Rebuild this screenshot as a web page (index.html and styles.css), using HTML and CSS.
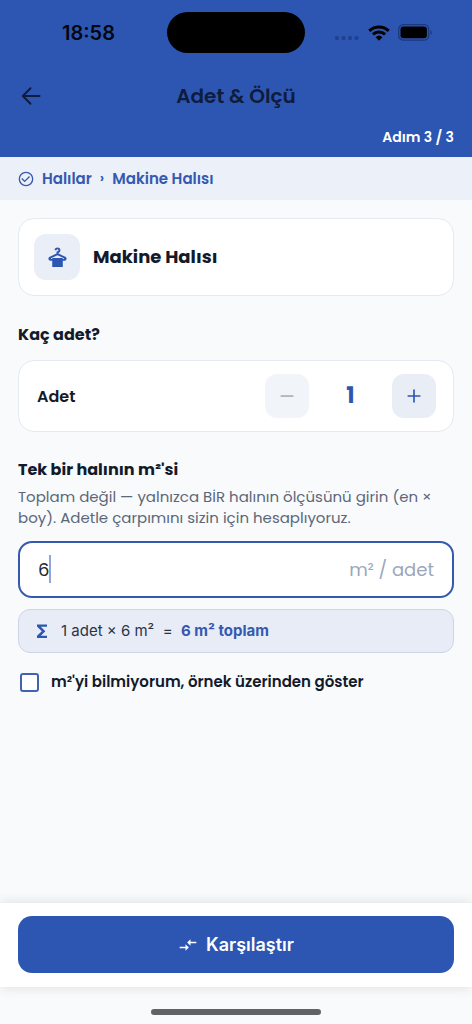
FILE: index.html
```html
<!DOCTYPE html>
<html lang="tr">
<head>
<meta charset="utf-8">
<meta name="viewport" content="width=device-width, initial-scale=1">
<title>Adet &amp; Ölçü</title>
<link rel="stylesheet" href="styles.css">
</head>
<body>
<div class="screen">
  <header class="header">
    <div class="status">
      <div class="status-side start"><span class="time">18:58</span></div>
      <div class="island"></div>
      <div class="status-side end">
        <svg width="26" height="18" viewBox="0 0 26 18" aria-hidden="true"><g fill="#1f4190"><rect x="1" y="12" width="4" height="4" rx="1.500"/><rect x="7.500" y="12" width="4" height="4" rx="1.500"/><rect x="14" y="12" width="4" height="4" rx="1.500"/><rect x="20.500" y="12" width="4" height="4" rx="1.500"/></g></svg>
        <svg width="22" height="16" viewBox="0 0 22 16" aria-hidden="true"><g fill="none" stroke="#000" stroke-width="3"><path d="M1.300 5.800a14 14 0 0 1 19.400 0"/><path d="M4.900 9.400a8.800 8.800 0 0 1 12.200 0"/></g><path d="M7.600 12.200a5 5 0 0 1 6.800 0L11 15.700z"/></svg>
        <svg width="35" height="17" viewBox="0 0 35 17" aria-hidden="true"><rect x=".7" y=".7" width="30" height="15.400" rx="4.600" fill="none" stroke="#1b397d" stroke-width="1.300"/><rect x="2.500" y="2.500" width="26.400" height="11.800" rx="3"/><path d="M32.500 6c1.700.8 1.700 4.200 0 5z" fill="#1b397d"/></svg>
      </div>
    </div>
    <div class="appbar">
      <button class="back" type="button" aria-label="Geri"><svg width="20" height="20" viewBox="0 0 20 20" fill="none" stroke="#0f1c3d" stroke-width="2" stroke-linecap="round" stroke-linejoin="round"><path d="M18.500 10H2M9.500 2.200 1.800 10l7.700 7.800"/></svg></button>
      <h1 class="title">Adet &amp; Ölçü</h1>
    </div>
    <p class="step">Adım 3 / 3</p>
  </header>
  <nav class="crumbs" aria-label="Kategori">
    <svg width="16" height="16" viewBox="0 0 24 24" fill="#3559b0" aria-hidden="true"><path d="M16.590 7.580 10 14.170l-3.590-3.580L5 12l5 5 8-8zM12 1a11 11 0 1 0 0 22 11 11 0 0 0 0-22zm0 20a9 9 0 1 1 0-18 9 9 0 0 1 0 18z"/></svg>
    <span>Halılar</span><span class="sep">›</span><span>Makine Halısı</span>
  </nav>
  <main class="content">
    <section class="card product">
      <span class="product-icon"><svg width="23" height="23" viewBox="0 0 24 24" fill="#2d56b2" aria-hidden="true"><path fill-rule="evenodd" d="M19.560 10.860 13 7.940V7.330c1.160-.410 2-1.520 2-2.830a3 3 0 0 0-6 0h2a1 1 0 1 1 1 1c-.550 0-1 .450-1 1v1.440l-6.560 2.920A2.400 2.400 0 0 0 2.500 13.060C2.500 14.400 3.580 15.500 5.420 15.500H6.500v6.500h11v-6.500h1.080C20.420 15.500 21.500 14.400 21.500 13.060c0-.950-1-1.810-1.940-2.200zM18.580 13.500H17.500v-1h-11v1H5.420c-.460 0-.580-.650-.170-.810L12 9.690l6.750 3c.420.190.280.810-.170.810z"/></svg></span>
      <h2 class="product-name">Makine Halısı</h2>
    </section>
    <section class="group quantity">
      <h2 class="label">Kaç adet?</h2>
      <div class="card counter">
        <span class="counter-label">Adet</span>
        <div class="stepper">
          <button class="step-btn off" type="button" aria-label="Azalt" disabled><svg width="22" height="22" viewBox="0 0 24 24" fill="currentColor"><path d="M5 11.200h14v1.700H5z"/></svg></button>
          <output class="count">1</output>
          <button class="step-btn" type="button" aria-label="Artır"><svg width="22" height="22" viewBox="0 0 24 24" fill="currentColor"><path d="M19 12.900h-6.100V19h-1.800v-6.100H5v-1.800h6.100V5h1.800v6.100H19z"/></svg></button>
        </div>
      </div>
    </section>
    <section class="group area">
      <label class="label" for="area">Tek bir halının m²'si</label>
      <p class="help">Toplam değil — yalnızca BİR halının ölçüsünü girin (en × boy). Adetle çarpımını sizin için hesaplıyoruz.</p>
      <div class="field">
        <input class="field-input" id="area" type="text" inputmode="decimal" value="6">
        <span class="caret"></span>
        <span class="unit">m² / adet</span>
      </div>
      <div class="total">
        <svg width="18" height="18" viewBox="0 0 18 18" fill="#2d56b2" aria-hidden="true"><path d="M14 2.500H4v2L8.800 9.200 4 13.700V16h10v-2.300H7.800l4.500-4.500-4.500-4.400H14z"/></svg>
        <span>1 adet × 6 m² &nbsp;=&nbsp; <strong>6 m² toplam</strong></span>
      </div>
      <label class="check"><input class="box" type="checkbox"><span>m²'yi bilmiyorum, örnek üzerinden göster</span></label>
    </section>
  </main>
  <footer class="footer">
    <button class="primary" type="button"><svg width="20" height="20" viewBox="0 0 24 24" fill="#fff" aria-hidden="true"><path d="M9.010 14H2v2h7.010v3L13 15l-3.990-4v3zm5.980-1v-3H22V8h-7.010V5L11 9l3.990 4z"/></svg>Karşılaştır</button>
  </footer>
  <div class="home"><span class="home-bar"></span></div>
</div>
</body>
</html>
```
FILE: styles.css
```css
* { box-sizing: border-box; }
body {
  margin: 0;
  font-family: Poppins, Inter, "Noto Sans", sans-serif;
  color: #131a2c;
  background: #f8fafc;
}
h1, h2, p { margin: 0; }
button, input { font: inherit; }
button { border: 0; padding: 0; }
svg { display: block; flex: none; }
.screen { min-height: 100vh; display: flex; flex-direction: column; }

.header { background: #2d56b2; }
.status { display: flex; align-items: center; height: 64px; padding: 12px 0 11px; }
.status-side { flex: 1; display: flex; align-items: center; justify-content: center; gap: 8px; }
.start { padding-left: 10px; }
.end { padding-right: 10px; }
.time { font: 600 20px/24px Inter, sans-serif; color: #03060f; }
.island { width: 138px; height: 41px; border-radius: 21px; background: #000; }
.appbar { display: grid; place-items: center; grid-template-columns: 32px 1fr 32px; padding: 0 15px; height: 64px; }
.back { background: none; width: 32px; height: 32px; display: grid; place-items: center; cursor: pointer; }
.title { font-size: 20px; line-height: 28px; font-weight: 600; color: #0f1c3d; }
.step { padding: 0 18px 11px; text-align: right; font-size: 14px; line-height: 18px; font-weight: 600; color: #fff; }

.crumbs { display: flex; align-items: center; gap: 8px; height: 43px; padding: 0 18px; background: #ebf0f9; color: #3559b0; font-size: 15px; font-weight: 600; }
.sep { font-size: 14px; }

.content { flex: 1; padding: 18px; }
.card { display: flex; align-items: center; background: #fff; border: 1px solid #e5e9f0; border-radius: 16px; }
.product { gap: 13px; padding: 15px; }
.product-icon { display: grid; place-items: center; width: 46px; height: 46px; border-radius: 12px; background: #e9eef7; }
.product-name { font-size: 18px; line-height: 28px; font-weight: 700; }
.group { display: flex; flex-direction: column; }
.quantity { margin-top: 27px; gap: 13px; }
.label { font-size: 16px; line-height: 24px; font-weight: 700; }
.counter { justify-content: space-between; padding: 13px 17px 13px 18px; }
.counter-label { font-size: 16px; font-weight: 600; }
.stepper { display: flex; align-items: center; }
.step-btn { display: grid; place-items: center; width: 44px; height: 44px; border-radius: 12px; background: #e9edf6; color: #2d56b2; cursor: pointer; }
.off { background: #f1f5f9; color: #a0aab9; }
.count { width: 83px; text-align: center; font-size: 22px; line-height: 32px; font-weight: 700; color: #2d56b2; }

.area { margin-top: 26px; }
.help { margin-top: 4px; font-size: 15px; line-height: 21px; color: #5d6779; }
.field { position: relative; display: flex; align-items: center; margin-top: 13px; height: 57px; padding: 0 18px; background: #fff; border: 2px solid #3559ae; border-radius: 14px; }
.field-input { flex: 1; min-width: 0; padding: 0; border: 0; outline: 0; background: none; font-size: 18px; line-height: 26px; color: #1f2737; }
.caret { position: absolute; left: 29px; top: 12px; width: 2px; height: 28px; background: #8fa6d6; }
.unit { font-size: 18px; color: #9ba7b9; }
.total { display: flex; align-items: center; gap: 10px; margin-top: 11px; height: 44px; padding: 0 14px; background: #e8ecf6; border: 1px solid #cdd5e7; border-radius: 12px; font: 400 15px/22px Inter, sans-serif; color: #2b3446; }
.total strong { font-weight: 700; color: #3559b0; }
.check { display: flex; align-items: center; gap: 12px; margin-top: 17px; padding-left: 2px; font-size: 15px; line-height: 24px; font-weight: 600; cursor: pointer; }
.box { appearance: none; flex: none; width: 19px; height: 19px; margin: 0; border: 2px solid #4063b3; border-radius: 3px; background: #fff; }

.footer { padding: 13px 18px 14px; background: #fff; box-shadow: 0 0 12px rgb(0 0 0 / 12%); }
.primary { display: flex; align-items: center; justify-content: center; gap: 8px; width: 100%; height: 57px; border-radius: 14px; background: #2d56b2; color: #fff; font: 600 18px/26px Inter, sans-serif; cursor: pointer; }
.home { display: flex; justify-content: center; padding: 22px 0 9px; }
.home-bar { width: 36%; height: 6px; border-radius: 3px; background: #626365; }
```
